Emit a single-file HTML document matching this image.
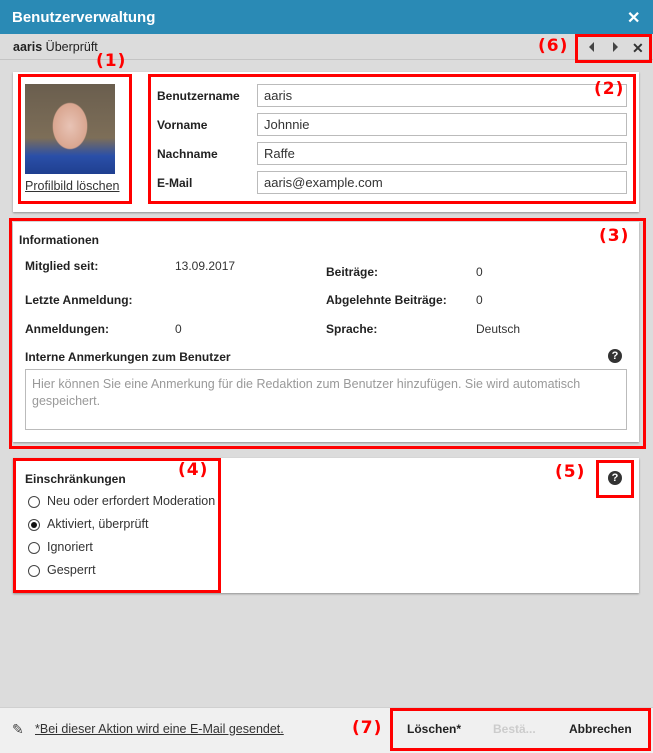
<!DOCTYPE html>
<html><head><meta charset="utf-8"><style>
*{box-sizing:border-box;margin:0;padding:0}
body{width:653px;height:753px;position:relative;background:#dcdcdc;font-family:"Liberation Sans",sans-serif;color:#222;font-size:12px;overflow:hidden}
.a{position:absolute}
.red{position:absolute;border:3px solid #f00;z-index:3}
.rl{position:absolute;color:#f00;font-weight:bold;font-size:17px;font-family:"DejaVu Sans",sans-serif;z-index:4;letter-spacing:1px}
.card{position:absolute;background:#fff;box-shadow:0 1px 2px rgba(0,0,0,.35)}
.b{font-weight:bold}
.inp{position:absolute;left:257px;width:370px;height:23px;border:1px solid #bbb;background:#fff;padding:3px 6px;font-size:13px;color:#333}
.q{position:absolute;width:14px;height:14px;border-radius:50%;background:#333;color:#fff;font-weight:bold;font-size:11px;text-align:center;line-height:14px}
.rad{position:absolute;left:28px;width:12px;height:12px;border:1px solid #444;border-radius:50%;background:#fff}
.rt{position:absolute;left:47px;font-size:12.5px;color:#333}
</style></head><body>
<div class="a" style="left:0;top:0;width:653px;height:34px;background:#2a8ab5"></div>
<div class="a b" style="left:12px;top:9px;color:#fff;font-size:15px">Benutzerverwaltung</div>
<div class="a b" style="left:627px;top:8px;color:#fff;font-size:16px">✕</div>
<div class="a" style="left:0;top:34px;width:653px;height:26px;background:#dcdcdc;border-bottom:1px solid #c4c4c4"></div>
<div class="a" style="left:13px;top:40px;font-size:12.5px"><b>aaris</b> Überprüft</div>
<div class="rl" style="left:538px;top:36px">(6)</div>
<div class="red" style="left:575px;top:34px;width:77px;height:29px"></div>
<div class="a" style="left:589px;top:42px;width:0;height:0;border-top:5px solid transparent;border-bottom:5px solid transparent;border-right:5px solid #444"></div>
<div class="a" style="left:613px;top:42px;width:0;height:0;border-top:5px solid transparent;border-bottom:5px solid transparent;border-left:5px solid #444"></div>
<div class="a b" style="left:632px;top:40px;font-size:14px;color:#333">✕</div>

<div class="card" style="left:13px;top:72px;width:626px;height:140px"></div>
<div class="a" style="left:25px;top:84px;width:90px;height:90px;background:radial-gradient(ellipse 24px 32px at 45px 42px,#e8c3b5 0,#d9a690 70%,transparent 74%),linear-gradient(180deg,#6a5e4e 0,#7d6e58 60%,#2a4fa8 80%,#1f3f90 100%)"></div>
<div class="a" style="left:25px;top:179px;font-size:12.5px;text-decoration:underline;color:#333">Profilbild löschen</div>
<div class="red" style="left:18px;top:74px;width:114px;height:130px"></div>
<div class="rl" style="left:96px;top:51px">(1)</div>
<div class="red" style="left:148px;top:74px;width:488px;height:130px"></div>
<div class="rl" style="left:594px;top:79px">(2)</div>
<div class="a b" style="left:157px;top:89px">Benutzername</div>
<div class="a b" style="left:157px;top:118px">Vorname</div>
<div class="a b" style="left:157px;top:147px">Nachname</div>
<div class="a b" style="left:157px;top:176px">E-Mail</div>
<div class="inp" style="top:84px">aaris</div>
<div class="inp" style="top:113px">Johnnie</div>
<div class="inp" style="top:142px">Raffe</div>
<div class="inp" style="top:171px">aaris@example.com</div>

<div class="card" style="left:13px;top:222px;width:626px;height:220px"></div>
<div class="red" style="left:9px;top:218px;width:637px;height:231px"></div>
<div class="rl" style="left:599px;top:226px">(3)</div>
<div class="a b" style="left:19px;top:233px">Informationen</div>
<div class="a b" style="left:25px;top:259px">Mitglied seit:</div>
<div class="a" style="left:175px;top:259px;color:#333">13.09.2017</div>
<div class="a b" style="left:326px;top:265px">Beiträge:</div>
<div class="a" style="left:476px;top:265px;color:#333">0</div>
<div class="a b" style="left:25px;top:293px">Letzte Anmeldung:</div>
<div class="a b" style="left:326px;top:293px">Abgelehnte Beiträge:</div>
<div class="a" style="left:476px;top:293px;color:#333">0</div>
<div class="a b" style="left:25px;top:322px">Anmeldungen:</div>
<div class="a" style="left:175px;top:322px;color:#333">0</div>
<div class="a b" style="left:326px;top:322px">Sprache:</div>
<div class="a" style="left:476px;top:322px;color:#333">Deutsch</div>
<div class="a b" style="left:25px;top:350px">Interne Anmerkungen zum Benutzer</div>
<div class="q" style="left:608px;top:349px">?</div>
<div class="a" style="left:25px;top:369px;width:602px;height:61px;border:1px solid #bbb;background:#fff;padding:6px 6px;color:#999;font-size:12.5px;line-height:17px">Hier können Sie eine Anmerkung für die Redaktion zum Benutzer hinzufügen. Sie wird automatisch gespeichert.</div>

<div class="card" style="left:13px;top:458px;width:626px;height:135px"></div>
<div class="red" style="left:13px;top:458px;width:208px;height:135px"></div>
<div class="rl" style="left:178px;top:460px">(4)</div>
<div class="a b" style="left:25px;top:472px">Einschränkungen</div>
<div class="rad" style="top:496px"></div><div class="rt" style="top:494px">Neu oder erfordert Moderation</div>
<div class="rad" style="top:519px"></div><div class="a" style="left:31px;top:522px;width:6px;height:6px;border-radius:50%;background:#111"></div><div class="rt" style="top:517px">Aktiviert, überprüft</div>
<div class="rad" style="top:542px"></div><div class="rt" style="top:540px">Ignoriert</div>
<div class="rad" style="top:565px"></div><div class="rt" style="top:563px">Gesperrt</div>
<div class="rl" style="left:555px;top:462px">(5)</div>
<div class="red" style="left:596px;top:460px;width:38px;height:38px"></div>
<div class="q" style="left:608px;top:471px">?</div>

<div class="a" style="left:0;top:707px;width:653px;height:46px;background:#f0f0f0;border-top:1px solid #d0d0d0"></div>
<div class="a" style="left:12px;top:721px;font-size:14px;color:#444">✎</div>
<div class="a" style="left:35px;top:722px;font-size:12.5px;text-decoration:underline;color:#333">*Bei dieser Aktion wird eine E-Mail gesendet.</div>
<div class="rl" style="left:352px;top:718px">(7)</div>
<div class="red" style="left:390px;top:708px;width:261px;height:43px"></div>
<div class="a b" style="left:407px;top:722px;color:#222">Löschen*</div>
<div class="a b" style="left:493px;top:722px;color:#ccc">Bestä...</div>
<div class="a b" style="left:569px;top:722px;color:#222">Abbrechen</div>
</body></html>
